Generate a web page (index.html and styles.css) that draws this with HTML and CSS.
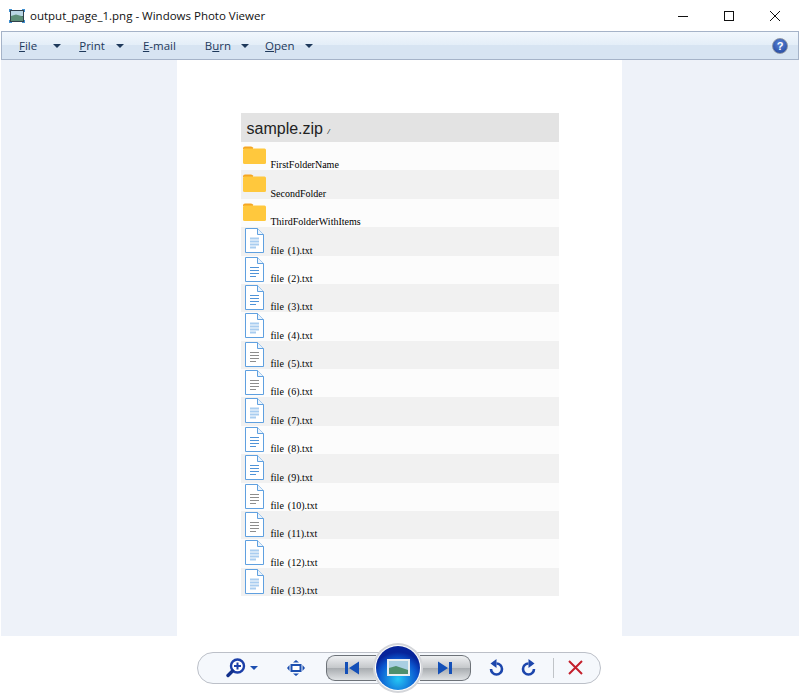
FILE: index.html
```html
<!DOCTYPE html>
<html lang="en">
<head>
    <meta charset="UTF-8">
    <title>output_page_1.png - Windows Photo Viewer</title>
    <link rel="stylesheet" href="styles.css">
</head>
<body>
    <svg class="defs" width="0" height="0">
        <symbol id="folder" viewBox="0 0 23 18">
            <path d="M0 2.5Q0 .5 2 .5H8Q9.5 .5 10.5 2H10V3H0Z" fill="#f5a623"/>
            <rect x="0" y="2.5" width="23" height="15.5" rx="1.5" fill="#ffc83d"/>
        </symbol>
        <symbol id="doc" viewBox="0 0 19 25">
            <path d="M.5 .5H12.500L18.500 6.500V24.500H.5Z" fill="#fff" stroke="#5fa0e0" stroke-width="1"/>
            <path d="M12.500 .5V6.500H18.500" fill="#eaf3fc" stroke="#5fa0e0" stroke-width="1"/>
            <path d="M5 10.500H14M5 13.500H14M5 16.500H14M5 19.500H11" fill="none" stroke="currentColor"/>
        </symbol>
    </svg>

    <div class="titlebar">
        <svg class="app-icon" width="16" height="16" viewBox="0 0 16 16">
            <rect x="1" y="2" width="14" height="12" fill="#2f3f4a"/>
            <rect x="2" y="3" width="12" height="5" fill="#b9d6e4"/>
            <path d="M2 8L7 6.5L14 8.5V13H2Z" fill="#5d8f78"/>
            <path d="M0 1H3V2H1V4H0ZM13 1H16V4H15V2H13ZM0 12H1V14H3V15H0ZM15 12H16V15H13V14H15Z" fill="#3f8fd0"/>
        </svg>
        <span class="title-text">output_page_1.png - Windows Photo Viewer</span>
        <div class="win-btns">
            <svg width="12" height="12" viewBox="0 0 12 12"><path d="M1 6.5H11" stroke="#111"/></svg>
            <svg width="12" height="12" viewBox="0 0 12 12"><rect x="1.5" y="1.5" width="9" height="9" fill="none" stroke="#111"/></svg>
            <svg width="12" height="12" viewBox="0 0 12 12"><path d="M1 1L11 11M11 1L1 11" stroke="#111"/></svg>
        </div>
    </div>

    <div class="menubar">
        <span class="menu m-file"><u>F</u>ile</span><i class="caret c-file"></i>
        <span class="menu m-print"><u>P</u>rint</span><i class="caret c-print"></i>
        <span class="menu m-mail"><u>E</u>-mail</span>
        <span class="menu m-burn">B<u>u</u>rn</span><i class="caret c-burn"></i>
        <span class="menu m-open"><u>O</u>pen</span><i class="caret c-open"></i>
        <span class="help">?</span>
    </div>

    <div class="viewer">
        <div class="sheet">
            <div class="listing">
                <div class="zip-head">sample.zip <small>/</small></div>
                <div class="row odd"><svg class="ico-folder"><use href="#folder"/></svg><span>FirstFolderName</span></div>
                <div class="row"><svg class="ico-folder"><use href="#folder"/></svg><span>SecondFolder</span></div>
                <div class="row odd"><svg class="ico-folder"><use href="#folder"/></svg><span>ThirdFolderWithItems</span></div>
                <div class="row"><svg class="ico-doc pale"><use href="#doc"/></svg><span>file (1).txt</span></div>
                <div class="row odd"><svg class="ico-doc blue"><use href="#doc"/></svg><span>file (2).txt</span></div>
                <div class="row"><svg class="ico-doc blue"><use href="#doc"/></svg><span>file (3).txt</span></div>
                <div class="row odd"><svg class="ico-doc pale"><use href="#doc"/></svg><span>file (4).txt</span></div>
                <div class="row"><svg class="ico-doc grey"><use href="#doc"/></svg><span>file (5).txt</span></div>
                <div class="row odd"><svg class="ico-doc grey"><use href="#doc"/></svg><span>file (6).txt</span></div>
                <div class="row"><svg class="ico-doc pale"><use href="#doc"/></svg><span>file (7).txt</span></div>
                <div class="row odd"><svg class="ico-doc blue"><use href="#doc"/></svg><span>file (8).txt</span></div>
                <div class="row"><svg class="ico-doc blue"><use href="#doc"/></svg><span>file (9).txt</span></div>
                <div class="row odd"><svg class="ico-doc grey"><use href="#doc"/></svg><span>file (10).txt</span></div>
                <div class="row"><svg class="ico-doc grey"><use href="#doc"/></svg><span>file (11).txt</span></div>
                <div class="row odd"><svg class="ico-doc pale"><use href="#doc"/></svg><span>file (12).txt</span></div>
                <div class="row"><svg class="ico-doc pale"><use href="#doc"/></svg><span>file (13).txt</span></div>
            </div>
        </div>
    </div>

    <div class="controls">
        <div class="pill">
            <svg class="zoom-ico" width="20" height="20" viewBox="0 0 20 20">
                <circle cx="11.5" cy="8" r="6.5" fill="#fff" stroke="#1c3fa8" stroke-width="2.4"/>
                <path d="M8 8H15M11.5 4.5V11.5" stroke="#1c3fa8" stroke-width="2"/>
                <path d="M6.5 13L2 17.5" stroke="#12308c" stroke-width="3.4" stroke-linecap="round"/>
            </svg>
            <i class="caret zoom-caret"></i>
            <svg class="fit-ico" width="18" height="18" viewBox="0 0 18 18">
                <rect x="4.500" y="6" width="9" height="6" fill="#fff" stroke="#1c4fb0" stroke-width="2"/>
                <path d="M6 3.500H12L9 1ZM6 14.500H12L9 17ZM2.500 6V12L0 9ZM15.500 6V12L18 9Z" fill="#1c4fb0"/>
            </svg>
            <div class="nav-btn prev">
                <svg width="16" height="14" viewBox="0 0 16 14"><path d="M1 1H4V13H1ZM15 0.500V13.500L5 7Z" fill="#1450b8"/></svg>
            </div>
            <div class="orb">
                <svg width="23" height="17" viewBox="0 0 23 17">
                    <rect x="0" y="0" width="23" height="17" fill="#e9eef0"/>
                    <rect x="2" y="2" width="19" height="13" fill="#a9cfe2"/>
                    <path d="M2 9L9 7L21 11V15H2Z" fill="#4f8f6c"/>
                </svg>
            </div>
            <div class="nav-btn next">
                <svg width="16" height="14" viewBox="0 0 16 14"><path d="M15 1H12V13H15ZM1 0.500V13.500L11 7Z" fill="#1450b8"/></svg>
            </div>
            <svg class="rot-l" width="15" height="17" viewBox="0 0 15 17">
                <path d="M2 10A5.500 5.500 0 1 0 7.500 4.500" fill="none" stroke="#1c46ac" stroke-width="2.600"/>
                <path d="M7.500 0V9L1.500 4.500Z" fill="#1c46ac"/>
            </svg>
            <svg class="rot-r" width="15" height="17" viewBox="0 0 15 17">
                <path d="M13 10A5.500 5.500 0 1 1 7.500 4.500" fill="none" stroke="#1c46ac" stroke-width="2.600"/>
                <path d="M7.500 0V9L13.500 4.500Z" fill="#1c46ac"/>
            </svg>
            <span class="sep"></span>
            <svg class="del" width="15" height="15" viewBox="0 0 15 15"><path d="M1 1L14 14M14 1L1 14" stroke="#c4202c" stroke-width="2"/></svg>
        </div>
    </div>
</body>
</html>
```
FILE: styles.css
```css
* { box-sizing: border-box; }
html, body { margin: 0; height: 696px; overflow: hidden; background: #fff; }
body { font-family: "Open Sans", "Noto Sans", sans-serif; display: flex; flex-direction: column; }
.defs { position: absolute; }

.titlebar {
    height: 31px;
    display: flex;
    align-items: center;
    padding-left: 9px;
}
.app-icon { margin-right: 5px; }
.title-text { font-size: 11.5px; color: #111; }
.win-btns {
    margin-left: auto;
    display: flex;
    gap: 34px;
    padding-right: 19px;
}

.menubar {
    height: 29px;
    margin: 0 1px;
    display: flex;
    align-items: center;
    border: 1px solid #a5b3c8;
    background: linear-gradient(#f1f7fd 0, #e4eef8 47%, #d7e4f2 48%, #d7e4f2 100%);
    color: #1e395b;
    font-size: 11.5px;
}
.m-file { margin-left: 17px; }
.m-print { margin-left: 18px; }
.m-mail { margin-left: 19px; }
.m-burn { margin-left: 29px; }
.m-open { margin-left: 16px; }
.caret {
    width: 0;
    height: 0;
    border-left: 4px solid transparent;
    border-right: 4px solid transparent;
    border-top: 4px solid #1e395b;
}
.c-file { margin-left: 16px; }
.c-print { margin-left: 11px; }
.c-burn, .c-open { margin-left: 10px; }
.help {
    margin-left: auto;
    margin-right: 10px;
    width: 16px;
    height: 16px;
    border-radius: 50%;
    background: radial-gradient(circle at 50% 35%, #5b86d8, #1c3f98);
    border: 1px solid #8b93a3;
    color: #fff;
    font: bold 11px/14px "Liberation Sans", sans-serif;
    text-align: center;
}

.viewer {
    height: 576px;
    margin: 0 1px;
    background: #eef2f9;
    display: flex;
    justify-content: center;
    padding-right: 2px;
}
.sheet {
    width: 445px;
    background: #fff;
    padding: 53px 63px 0 64px;
}
.listing { width: 318px; }
.zip-head {
    height: 29px;
    background: #e3e3e3;
    padding-left: 6px;
    font: 16px/31px "Liberation Sans", sans-serif;
    color: #222;
}
.zip-head small { font-size: 8px; font-style: italic; }
.row {
    height: 28.375px;
    background: #f1f1f1;
    display: flex;
    align-items: flex-end;
    font: 10px/11px "Liberation Serif", serif;
    word-spacing: 1.500px;
    color: #000;
    position: relative;
}
.row.odd { background: #fcfcfc; }
.row span { margin-left: 30px; }
.ico-folder, .ico-doc { position: absolute; }
.ico-folder { left: 2px; top: 4px; width: 23px; height: 18px; }
.ico-doc { left: 4px; top: 1px; width: 19px; height: 25px; }
.blue { color: #4f93d8; }
.pale { color: #a9cdf0; stroke-width: 2; }
.grey { color: #8d8d8d; }

.controls {
    height: 60px;
    display: flex;
    justify-content: center;
    align-items: center;
    padding-top: 3px;
    padding-right: 2px;
}
.pill {
    width: 404px;
    height: 32px;
    display: flex;
    align-items: center;
    border: 1px solid #bcc0c8;
    border-radius: 16px;
    background: #f5f8fc;
}
.zoom-ico { margin-left: 28px; }
.zoom-caret { border-top-color: #1c4fb0; margin-left: 4px; margin-right: 29px; }
.nav-btn {
    height: 26px;
    display: flex;
    align-items: center;
    justify-content: center;
    border: 1px solid #6d7278;
    background: linear-gradient(#eef0f2, #c4c7ca 50%, #a9adb1 52%, #dfe2e4);
}
.fit-ico { margin-right: 21px; }
.prev { width: 50px; border-radius: 9px 0 0 9px; border-right: 0; }
.next { width: 51px; border-radius: 0 9px 9px 0; border-left: 0; }
.orb {
    width: 44px;
    height: 44px;
    margin: -12px 0;
    flex: none;
    z-index: 1;
    border-radius: 50%;
    display: flex;
    align-items: center;
    justify-content: center;
    background: radial-gradient(circle at 50% 75%, #25c8f5 0, #0b58d0 48%, #06249a 68%);
    box-shadow: 0 0 0 1px #fff, 0 0 0 3px #d4d6da;
}
.rot-l { margin-left: 18px; }
.rot-r { margin-left: 17px; }
.sep { width: 1px; height: 20px; background: #c0c4c8; margin: 0 14px 0 17px; }
```
